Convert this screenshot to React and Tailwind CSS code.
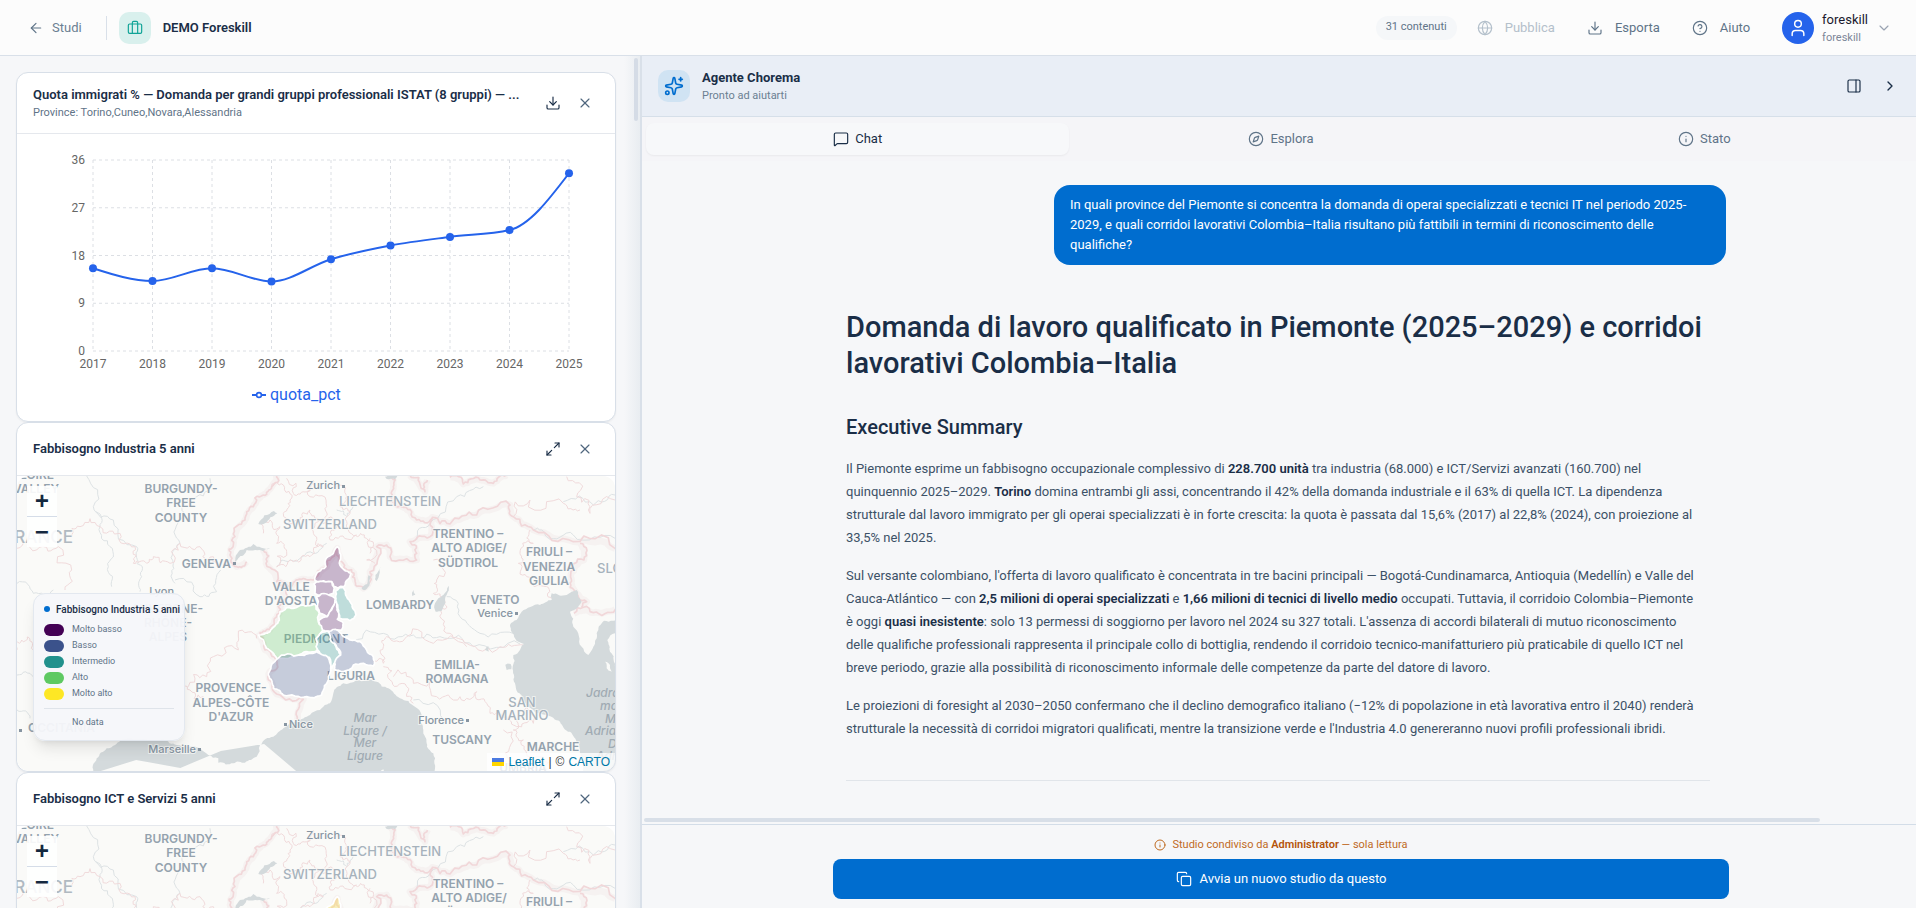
import React from "react";
import {
  ArrowLeft,
  Briefcase,
  ChevronDown,
  ChevronRight,
  CircleQuestionMark,
  Compass,
  Copy,
  Download,
  Globe,
  Info,
  Maximize2,
  MessageSquare,
  PanelRight,
  Sparkles,
  User,
  X,
} from "lucide-react";

/* ---------- line chart ---------- */

const SERIES = [
  [2017, 15.6],
  [2018, 13.2],
  [2019, 15.6],
  [2020, 13.1],
  [2021, 17.3],
  [2022, 19.9],
  [2023, 21.5],
  [2024, 22.8],
  [2025, 33.5],
];

const PLOT = { left: 76, right: 552, top: 26, bottom: 217, max: 36 };

// Monotone cubic interpolation through the points
function monotonePath(pts) {
  const n = pts.length;
  const slope = [];
  for (let i = 0; i < n - 1; i++) {
    slope.push((pts[i + 1][1] - pts[i][1]) / (pts[i + 1][0] - pts[i][0]));
  }
  const t = new Array(n).fill(0);
  for (let i = 1; i < n - 1; i++) {
    const a = slope[i - 1];
    const b = slope[i];
    const mean = (a + b) / 2;
    t[i] = (Math.sign(a) + Math.sign(b)) * Math.min(Math.abs(a), Math.abs(b), 0.5 * Math.abs(mean)) || 0;
  }
  t[0] = (3 * slope[0] - t[1]) / 2;
  t[n - 1] = (3 * slope[n - 2] - t[n - 2]) / 2;
  let d = `M${pts[0][0]},${pts[0][1]}`;
  for (let i = 0; i < n - 1; i++) {
    const dx = (pts[i + 1][0] - pts[i][0]) / 3;
    d += `C${pts[i][0] + dx},${pts[i][1] + dx * t[i]} ${pts[i + 1][0] - dx},${pts[i + 1][1] - dx * t[i + 1]} ${pts[i + 1][0]},${pts[i + 1][1]}`;
  }
  return d;
}

function LineChart() {
  const { left, right, top, bottom, max } = PLOT;
  const x = (i) => left + ((right - left) * i) / (SERIES.length - 1);
  const y = (v) => bottom - ((bottom - top) * v) / max;
  const pts = SERIES.map(([, v], i) => [x(i), y(v)]);
  return (
    <svg viewBox="0 0 598 287" className="block w-full" role="img" aria-label="quota_pct">
      <g stroke="#dcdfe4" strokeDasharray="3 3">
        {[0, 9, 18, 27, 36].map((v) => (
          <line key={v} x1={left} x2={right} y1={y(v)} y2={y(v)} />
        ))}
        {SERIES.map(([year], i) => (
          <line key={year} x1={x(i)} x2={x(i)} y1={top} y2={bottom} />
        ))}
      </g>
      <g fill="#666" fontSize="12">
        {[0, 9, 18, 27, 36].map((v) => (
          <text key={v} x={left - 8} y={y(v) + 4} textAnchor="end">
            {v}
          </text>
        ))}
        {SERIES.map(([year], i) => (
          <text key={year} x={x(i)} y={bottom + 17} textAnchor="middle">
            {year}
          </text>
        ))}
      </g>
      <path d={monotonePath(pts)} fill="none" stroke="#2563eb" strokeWidth="2" />
      {pts.map(([cx, cy]) => (
        <circle key={cx} cx={cx} cy={cy} r="4" fill="#2563eb" />
      ))}
      <g stroke="#2563eb" strokeWidth="2" fill="none">
        <path d="M235 261h5M244 261h5" />
        <circle cx="242" cy="261" r="2.4" strokeWidth="1.6" />
      </g>
      <text x="253" y="266" fontSize="16" fill="#2563eb">
        quota_pct
      </text>
    </svg>
  );
}

/* ---------- map ---------- */

function makeRandom(seed) {
  let s = seed;
  return () => {
    s = (s * 16807) % 2147483647;
    return s / 2147483647 - 0.5;
  };
}

// Turns a coarse outline into a ragged one, as borders and coasts look
function ragged(points, closed, seed, rough = 0.28) {
  const rnd = makeRandom(seed);
  let pts = closed ? [...points, points[0]] : points;
  for (let pass = 0; pass < 3; pass++) {
    const next = [pts[0]];
    for (let i = 1; i < pts.length; i++) {
      const [ax, ay] = pts[i - 1];
      const [bx, by] = pts[i];
      const len = Math.hypot(bx - ax, by - ay);
      if (len > 9) {
        const k = rnd() * rough;
        next.push([(ax + bx) / 2 - (by - ay) * k, (ay + by) / 2 + (bx - ax) * k]);
      }
      next.push(pts[i]);
    }
    pts = next;
  }
  return "M" + pts.map(([a, b]) => `${a.toFixed(1)},${b.toFixed(1)}`).join("L") + (closed ? "Z" : "");
}

const WATER = [
  [[280, 1060], [290, 1015], [320, 985], [345, 975], [352, 968], [420, 958], [490, 958], [530, 975], [600, 985], [625, 1005], [655, 1015], [655, 1028], [700, 1030], [735, 1028], [770, 1010], [780, 975], [820, 950], [850, 925], [890, 905], [930, 885], [960, 870], [990, 850], [1000, 820], [1030, 790], [1070, 780], [1130, 785], [1165, 805], [1200, 835], [1245, 860], [1265, 885], [1270, 930], [1280, 970], [1300, 1000], [1305, 1060]],
  [[1540, 705], [1538, 740], [1545, 790], [1570, 840], [1600, 870], [1640, 885], [1680, 905], [1710, 935], [1735, 970], [1745, 1010], [1750, 1060], [1860, 1060], [1860, 612], [1840, 602], [1812, 602], [1790, 640], [1780, 680], [1765, 705], [1745, 680], [1720, 620], [1710, 575], [1735, 560], [1745, 545], [1730, 510], [1700, 525], [1655, 520], [1655, 540], [1620, 555], [1565, 575], [1550, 600], [1530, 615], [1545, 655], [1572, 672], [1560, 690]],
  [[705, 425], [720, 390], [760, 372], [810, 385], [790, 394], [740, 390], [715, 415]],
  [[775, 312], [822, 273], [832, 280], [795, 310]],
  [[1307, 575], [1305, 550], [1330, 525], [1347, 497], [1340, 525], [1325, 572]],
  [[1085, 507], [1102, 492], [1106, 465], [1112, 470], [1108, 497], [1092, 511]],
  [[1125, 478], [1134, 455], [1142, 440], [1138, 462], [1130, 484]],
  [[1237, 528], [1240, 510], [1246, 524]],
  [[1516, 734], [1532, 732], [1534, 748], [1520, 750]],
  [[1155, 170], [1192, 168], [1185, 178], [1160, 177]],
  [[1455, 690], [1465, 678], [1466, 695]],
];

const ISLANDS = [
  [[1822, 660], [1845, 640], [1860, 700], [1845, 720], [1830, 695]],
  [[1815, 725], [1830, 735], [1835, 755], [1820, 745]],
  [[1845, 700], [1860, 690], [1860, 770], [1848, 750]],
  [[1150, 1048], [1152, 1054], [1142, 1052]],
];

// Country borders
const BORDERS = [
  [[830, 165], [815, 200], [790, 225], [760, 260], [735, 300], [705, 350], [700, 375], [690, 405], [710, 440], [740, 425]],
  [[790, 390], [798, 430], [830, 485], [870, 500], [905, 478], [942, 480], [980, 440], [1012, 385], [1030, 430], [1062, 460], [1065, 480], [1090, 505], [1105, 490], [1110, 455], [1130, 380], [1160, 375], [1170, 410], [1250, 420], [1250, 400], [1230, 365], [1290, 350], [1297, 292], [1350, 312], [1430, 285], [1530, 255], [1540, 290], [1600, 330], [1720, 365], [1846, 386]],
  [[835, 490], [850, 540], [838, 580], [810, 630], [776, 648], [795, 690], [830, 720], [806, 762], [830, 822], [910, 838], [892, 900]],
  [[1170, 165], [1180, 200], [1175, 240], [1210, 262], [1250, 300], [1297, 295]],
  [[1230, 165], [1262, 200], [1275, 215], [1282, 180]],
  [[1350, 172], [1390, 192], [1440, 180], [1480, 190], [1520, 165]],
  [[1740, 370], [1752, 420], [1712, 465], [1722, 510], [1760, 545], [1745, 562]],
  [[1722, 580], [1780, 578], [1846, 568]],
];

// Regional borders
const REGIONS = [
  [[815, 205], [850, 195], [870, 240], [850, 280], [900, 300], [930, 270], [960, 300], [940, 340], [970, 380]],
  [[860, 175], [880, 220], [920, 215], [940, 180], [930, 230], [980, 260], [960, 300], [1010, 320], [1000, 360], [1060, 350], [1100, 355], [1110, 400]],
  [[790, 340], [810, 300], [840, 320], [830, 370], [860, 395], [830, 440], [880, 425], [930, 410], [970, 380]],
  [[1010, 200], [1040, 230], [1020, 260], [1050, 280], [1045, 330], [1070, 345]],
  [[51, 385], [110, 390], [175, 380], [215, 450], [195, 510]],
  [[215, 350], [240, 320], [300, 320], [360, 340], [405, 380], [400, 430], [440, 430], [460, 410], [510, 430], [540, 370], [600, 380], [640, 410], [650, 440]],
  [[565, 800], [620, 770], [640, 710], [715, 690], [715, 645], [770, 655]],
  [[610, 830], [570, 810], [550, 795]],
  [[51, 690], [65, 660], [95, 665], [100, 690]],
  [[1300, 420], [1310, 480], [1300, 520], [1330, 540], [1325, 580], [1350, 640], [1400, 670], [1500, 680], [1570, 675]],
  [[1560, 400], [1555, 430], [1580, 470], [1640, 500], [1655, 535]],
  [[1560, 400], [1600, 370], [1590, 330]],
  [[1120, 725], [1150, 730], [1150, 680], [1160, 650], [1220, 650], [1300, 670], [1400, 680]],
  [[1150, 740], [1170, 780], [1220, 800], [1240, 850]],
  [[1180, 770], [1240, 790], [1310, 830], [1380, 830], [1430, 815], [1460, 850], [1470, 880], [1520, 890], [1550, 920], [1600, 910], [1560, 870]],
  [[1510, 930], [1515, 1000], [1540, 1050]],
  [[1550, 900], [1540, 930], [1570, 960], [1590, 1010], [1640, 1050]],
  [[1700, 170], [1730, 230], [1770, 280], [1845, 240]],
  [[1110, 355], [1100, 420], [1125, 430]],
  [[1540, 290], [1590, 240], [1690, 250], [1740, 270]],
];

// Rivers
const RIVERS = [
  [[260, 168], [280, 260], [340, 300], [410, 380], [415, 430]],
  [[630, 175], [590, 230], [545, 260], [535, 300], [540, 370], [520, 430], [525, 490]],
  [[288, 275], [300, 320], [330, 380], [325, 440], [335, 500]],
  [[51, 490], [100, 520], [160, 510]],
  [[410, 430], [425, 470], [420, 515]],
  [[525, 480], [600, 530], [650, 515], [662, 450]],
  [[51, 765], [100, 770]],
  [[51, 870], [90, 895]],
  [[1060, 665], [1150, 640], [1240, 645], [1320, 650], [1420, 680], [1560, 672]],
  [[1250, 360], [1290, 310], [1370, 230], [1450, 200]],
  [[1690, 245], [1780, 255], [1845, 225]],
  [[1600, 330], [1640, 350], [1720, 345], [1845, 355]],
  [[1340, 530], [1380, 590], [1440, 640], [1540, 640]],
  [[830, 440], [870, 420], [940, 400], [980, 370]],
  [[1010, 270], [1040, 290], [1060, 260]],
  [[1240, 840], [1330, 900], [1390, 905]],
];

const AREAS = {
  north: [[1012, 380], [1018, 430], [1053, 460], [1034, 498], [1012, 504], [1002, 500], [995, 485], [945, 482], [955, 455], [978, 440], [975, 425], [1000, 400]],
  biella: [[942, 492], [960, 484], [995, 485], [1003, 505], [1000, 520], [960, 526], [945, 520]],
  vercelli: [[950, 530], [980, 522], [1006, 536], [998, 560], [980, 590], [960, 580], [952, 560]],
  casale: [[1006, 540], [1010, 560], [1012, 598], [1030, 610], [1025, 630], [968, 630], [956, 602], [982, 590], [998, 562]],
  novara: [[1008, 512], [1030, 503], [1050, 545], [1068, 585], [1050, 602], [1018, 594], [1010, 550]],
  torino: [[840, 575], [880, 565], [910, 555], [945, 552], [958, 580], [955, 606], [968, 632], [948, 655], [950, 692], [900, 703], [830, 715], [800, 685], [790, 660], [775, 645], [810, 635], [838, 600]],
  asti: [[950, 655], [975, 636], [984, 634], [1000, 655], [1008, 680], [1022, 705], [1005, 728], [995, 745], [988, 712], [960, 700], [948, 680]],
  alessandria: [[984, 634], [1015, 632], [1050, 660], [1080, 665], [1100, 690], [1120, 710], [1120, 738], [1060, 735], [1030, 755], [1003, 748], [1004, 728], [1022, 705], [1008, 675]],
  cuneo: [[830, 718], [900, 705], [950, 695], [984, 712], [992, 745], [985, 770], [965, 825], [920, 830], [850, 825], [820, 805], [805, 765]],
};

const CLASSES = [
  ["Molto basso", "bg-[#440154]"],
  ["Basso", "bg-[#3b528b]"],
  ["Intermedio", "bg-[#21918c]"],
  ["Alto", "bg-[#5ec962]"],
  ["Molto alto", "bg-[#fde725]"],
];

const INDUSTRY_FILL = {
  north: "#440154",
  biella: "#440154",
  vercelli: "#440154",
  casale: "#440154",
  novara: "#21918c",
  torino: "#5ec962",
  asti: "#21918c",
  alessandria: "#3b528b",
  cuneo: "#3b528b",
};

const ICT_FILL = {
  north: "#fde725",
  biella: "#440154",
  vercelli: "#3b528b",
  casale: "#440154",
  novara: "#21918c",
  torino: "#fde725",
  asti: "#3b528b",
  alessandria: "#21918c",
  cuneo: "#5ec962",
};

// [text, x, baseline, anchor, kind]
const LABELS = [
  ["LOIRE", 20, 3, "middle", "region"],
  ["VALLEY", 19, 17, "middle", "region"],
  ["FRANCE", 56, 67, "end", "nation"],
  ["BURGUNDY-", 164, 17, "middle", "region"],
  ["FREE", 164, 31, "middle", "region"],
  ["COUNTY", 164, 46, "middle", "region"],
  ["Zurich", 323, 13, "end", "city"],
  ["LIECHTENSTEIN", 373, 30, "middle", "country"],
  ["SWITZERLAND", 313, 53, "middle", "country"],
  ["GENEVA", 214, 92, "end", "region"],
  ["VALLE", 274, 115, "middle", "region"],
  ["D'AOSTA", 274, 129, "middle", "region"],
  ["PIEDMONT", 299, 167, "middle", "region"],
  ["Lyon", 157, 119, "end", "city"],
  ["AUVERGNE-", 186, 137, "end", "region"],
  ["RHÔNE-", 175, 151, "end", "region"],
  ["ALPES", 170, 165, "end", "region"],
  ["PROVENCE-", 214, 216, "middle", "region"],
  ["ALPES-CÔTE", 214, 231, "middle", "region"],
  ["D'AZUR", 214, 245, "middle", "region"],
  ["Nice", 272, 252, "start", "city"],
  ["Marseille", 179, 277, "end", "city"],
  ["OCCITANIA", 11, 256, "start", "region"],
  ["TRENTINO –", 451, 62, "middle", "region"],
  ["ALTO ADIGE/", 452, 76, "middle", "region"],
  ["SÜDTIROL", 451, 91, "middle", "region"],
  ["FRIULI –", 532, 80, "middle", "region"],
  ["VENEZIA", 532, 95, "middle", "region"],
  ["GIULIA", 532, 109, "middle", "region"],
  ["SLOVENIA", 580, 97, "start", "country"],
  ["LOMBARDY", 383, 133, "middle", "region"],
  ["VENETO", 478, 128, "middle", "region"],
  ["Venice", 496, 141, "end", "city"],
  ["EMILIA-", 440, 193, "middle", "region"],
  ["ROMAGNA", 440, 207, "middle", "region"],
  ["LIGURIA", 334, 204, "middle", "region"],
  ["SAN", 505, 231, "middle", "country"],
  ["MARINO", 505, 244, "middle", "country"],
  ["Florence", 447, 248, "end", "city"],
  ["TUSCANY", 445, 268, "middle", "region"],
  ["MARCHE", 536, 275, "middle", "region"],
  ["UMBRIA", 506, 296, "middle", "region"],
  ["Mar", 348, 246, "middle", "sea"],
  ["Ligure /", 348, 259, "middle", "sea"],
  ["Mer", 348, 271, "middle", "sea"],
  ["Ligure", 348, 284, "middle", "sea"],
  ["Jadransko", 569, 221, "start", "sea"],
  ["more /", 583, 234, "start", "sea"],
  ["Mare", 588, 247, "start", "sea"],
  ["Adriatico", 568, 259, "start", "sea"],
  ["Deti", 591, 272, "start", "sea"],
  ["Adriatik", 579, 284, "start", "sea"],
];

const LABEL_STYLE = {
  region: "fill-[#94a2ae] text-[12px] font-semibold",
  country: "fill-[#a6b2bc] text-[13px] font-medium",
  nation: "fill-[#b0b9c1] text-[17px] font-medium",
  city: "fill-[#8795a2] text-[11px] font-medium",
  sea: "fill-[#a0abb3] text-[12px] font-medium italic",
};

const CITY_DOTS = [
  [326, 10],
  [217, 87],
  [268, 248],
  [182, 273],
  [499, 137],
  [450, 244],
  [3, 254],
];

function BaseMap({ fills }) {
  return (
    <svg
      viewBox="0 0 598 295"
      className="block w-full bg-[#fafaf8] font-['Inter','Open_Sans',sans-serif]"
      role="img"
      aria-label="Mappa"
    >
      <g transform="translate(-17 -56) scale(0.33333)">
        <g fill="none" stroke="#f6f2f1" strokeWidth="20" strokeLinejoin="round">
          {BORDERS.map((line, i) => (
            <path key={i} d={ragged(line, false, 41 + i * 97)} />
          ))}
        </g>
        <g fill="none" stroke="#dde2e4" strokeWidth="3">
          {RIVERS.map((line, i) => (
            <path key={i} d={ragged(line, false, 311 + i * 53, 0.5)} />
          ))}
        </g>
        <g fill="none" stroke="#f0dadb" strokeWidth="3">
          {REGIONS.map((line, i) => (
            <path key={i} d={ragged(line, false, 907 + i * 71, 0.8)} />
          ))}
        </g>
        <g fill="none" stroke="#f1d7d9" strokeWidth="5" strokeLinejoin="round">
          {BORDERS.map((line, i) => (
            <path key={i} d={ragged(line, false, 41 + i * 97, 0.6)} />
          ))}
        </g>
        <g fill="#d4dadc">
          {WATER.map((area, i) => (
            <path key={i} d={ragged(area, true, 17 + i * 131)} />
          ))}
        </g>
        <g fill="#fafaf8">
          {ISLANDS.map((area, i) => (
            <path key={i} d={ragged(area, true, 67 + i * 31)} />
          ))}
        </g>
      </g>
      {LABELS.map(([text, x, y, anchor, kind]) => (
        <text
          key={`${text}${y}`}
          x={x}
          y={y}
          textAnchor={anchor}
          className={LABEL_STYLE[kind]}
          stroke={kind === "sea" ? "none" : "#fafaf8"}
          strokeWidth="2"
          strokeOpacity="0.7"
          paintOrder="stroke"
        >
          {text}
        </text>
      ))}
      {CITY_DOTS.map(([x, y]) => (
        <rect key={`${x}-${y}`} x={x - 1} y={y - 1} width="3" height="3" fill="#8795a2" />
      ))}
      <g transform="translate(-17 -56) scale(0.33333)">
        {Object.entries(AREAS).map(([name, area], i) => (
          <path
            key={name}
            d={ragged(area, true, 501 + i * 89, 0.3)}
            fill={fills[name]}
            fillOpacity="0.27"
            stroke="#fff"
            strokeWidth="5"
            strokeLinejoin="round"
          />
        ))}
      </g>
    </svg>
  );
}

function MapLegend({ title }) {
  return (
    <div className="absolute top-[117px] left-4 w-[152px] rounded-xl border border-[#e3e8ef] bg-[#f6f7fa]/95 px-[10px] pt-[9px] pb-1 shadow-lg">
      <div className="flex h-3 items-center gap-1.5 whitespace-nowrap text-[10px] font-medium text-[#1a2e47]">
        <span className="size-1.5 shrink-0 rounded-full bg-[#006dcf]" />
        {title}
      </div>
      <ul className="mt-[9px] flex flex-col gap-1">
        {CLASSES.map(([name, colour]) => (
          <li key={name} className="flex h-3 items-center gap-2 text-[9px] text-[#5f7488]">
            <span className={`h-3 w-5 rounded-full ${colour}`} />
            {name}
          </li>
        ))}
      </ul>
      <div className="mt-2 flex h-7 items-center border-t border-[#dfe4ea] pl-7 text-[9px] text-[#5f7488]">No data</div>
    </div>
  );
}

function LeafletMap({ title, fills }) {
  const zoomButton =
    "flex h-[30px] w-[30px] items-center justify-center bg-white/90 pt-1 font-['Liberation_Mono',monospace] text-[24px] leading-none font-bold text-[#14283f]";
  return (
    <div className="relative overflow-hidden rounded-xl">
      <BaseMap fills={fills} />
      <div className="absolute top-2.5 left-2.5 flex flex-col">
        <button type="button" aria-label="Zoom in" className={zoomButton}>
          +
        </button>
        <span className="h-px bg-[#d5dde8]" />
        <button type="button" aria-label="Zoom out" className={zoomButton}>
          −
        </button>
      </div>
      <MapLegend title={title} />
      <div className="absolute right-0 bottom-0 flex h-[18px] items-center gap-1 bg-white/80 px-[5px] font-['Liberation_Sans',sans-serif] text-[12px] text-[#333]">
        <a href="#leaflet" className="flex items-center gap-1 text-[#0078a8]">
          <svg viewBox="0 0 12 8" className="h-2 w-3">
            <path fill="#4C7BE1" d="M0 0h12v4H0z" />
            <path fill="#FFD500" d="M0 4h12v4H0z" />
          </svg>
          Leaflet
        </a>
        <span>|</span>
        <span>©</span>
        <a href="#carto" className="text-[#0078a8]">
          CARTO
        </a>
      </div>
    </div>
  );
}

/* ---------- cards ---------- */

function Card({ title, subtitle, action, children }) {
  return (
    <section className="shrink-0 overflow-hidden rounded-xl border border-[#d8dfe8] bg-white shadow-xs">
      <header
        className={`flex items-center gap-2 border-b border-[#e5e8ed] px-4 ${subtitle ? "h-[61px]" : "h-[53px]"}`}
      >
        <div className="min-w-0 flex-1">
          <h3 className="truncate text-[13px] leading-5 font-semibold text-[#1a2e47]">{title}</h3>
          {subtitle && <p className="truncate text-[11px] leading-4 text-[#5f7488]">{subtitle}</p>}
        </div>
        <div className="flex shrink-0 items-center">
          {action}
          <button type="button" aria-label="Chiudi" className="flex size-7 items-center justify-center text-[#50677e]">
            <X size={16} strokeWidth={1.75} />
          </button>
        </div>
      </header>
      {children}
    </section>
  );
}

function CardAction({ label, icon: Icon }) {
  return (
    <button type="button" aria-label={label} className="mr-1 flex size-7 items-center justify-center text-[#1a2e47]">
      <Icon size={16} strokeWidth={1.75} />
    </button>
  );
}

function StudyPanel() {
  return (
    <aside className="relative flex w-[642px] shrink-0 overflow-hidden border-r-2 border-[#d9e0e9] bg-[#f6f7f9]">
      <div className="flex h-full min-w-0 flex-1 flex-col overflow-hidden pt-4 pr-6 pl-4">
        <Card
          title="Quota immigrati % — Domanda per grandi gruppi professionali ISTAT (8 gruppi) — ..."
          subtitle="Province: Torino,Cuneo,Novara,Alessandria"
          action={<CardAction label="Scarica" icon={Download} />}
        >
          <LineChart />
        </Card>
        <Card title="Fabbisogno Industria 5 anni" action={<CardAction label="Espandi" icon={Maximize2} />}>
          <LeafletMap title="Fabbisogno Industria 5 anni" fills={INDUSTRY_FILL} />
        </Card>
        <Card title="Fabbisogno ICT e Servizi 5 anni" action={<CardAction label="Espandi" icon={Maximize2} />}>
          <LeafletMap title="Fabbisogno ICT e Servizi" fills={ICT_FILL} />
        </Card>
      </div>
      <div className="absolute inset-y-0 right-0 w-4 bg-linear-to-r from-transparent to-[#e9edf1]" />
      <div className="absolute top-0.5 right-0.5 h-[63px] w-1 rounded-full bg-[#d5dce6]" />
    </aside>
  );
}

/* ---------- header ---------- */

function HeaderButton({ icon: Icon, label, disabled }) {
  return (
    <button
      type="button"
      disabled={disabled}
      className={`flex h-8 items-center gap-3 px-4 text-[13px] ${disabled ? "text-[#b4c0cb]" : "text-[#5f7488]"}`}
    >
      <Icon size={16} strokeWidth={1.75} />
      {label}
    </button>
  );
}

function TopBar() {
  return (
    <header className="flex h-14 shrink-0 items-center border-b border-[#d9e0e9] bg-[#fcfcfc] pr-6 pl-7">
      <a href="#studi" className="flex items-center gap-2 text-[13px] text-[#6b7f92]">
        <ArrowLeft size={16} strokeWidth={1.75} className="text-[#5f7488]" />
        Studi
      </a>
      <span className="ml-6 h-6 w-px bg-[#d9e0e9]" />
      <span className="ml-3 flex size-8 items-center justify-center rounded-[10px] bg-[#d9f0ed] text-[#0fa396]">
        <Briefcase size={16} strokeWidth={1.75} />
      </span>
      <h1 className="ml-3 text-[13px] font-semibold text-[#1a2e47]">DEMO Foreskill</h1>
      <div className="ml-auto flex items-center">
        <span className="mr-1 flex h-6 items-center rounded-full bg-[#f5f7f9] px-2.5 text-[11px] text-[#5f7488]">
          31 contenuti
        </span>
        <HeaderButton icon={Globe} label="Pubblica" disabled />
        <HeaderButton icon={Download} label="Esporta" />
        <HeaderButton icon={CircleQuestionMark} label="Aiuto" />
        <button type="button" className="ml-4 flex items-center gap-2 text-left">
          <span className="flex size-8 items-center justify-center rounded-full bg-[#2563eb] text-white">
            <User size={20} strokeWidth={1.75} />
          </span>
          <span className="flex flex-col">
            <span className="text-[13px] leading-5 text-[#1a1a2e]">foreskill</span>
            <span className="text-[11px] leading-4 text-[#7c8698]">foreskill</span>
          </span>
          <ChevronDown size={16} strokeWidth={1.75} className="text-[#9aa3b2]" />
        </button>
      </div>
    </header>
  );
}

/* ---------- agent ---------- */

function Tab({ icon: Icon, label, active }) {
  return (
    <button
      type="button"
      role="tab"
      aria-selected={active ? "true" : "false"}
      className={`flex h-8 flex-1 items-center justify-center gap-1.5 rounded-lg text-[13px] ${
        active ? "bg-[#f7f8fa] text-[#1a2e47] shadow-xs" : "text-[#5f7488]"
      }`}
    >
      <Icon size={16} strokeWidth={1.75} />
      {label}
    </button>
  );
}

function Strong({ children }) {
  return <strong className="font-semibold text-[#1a2e47]">{children}</strong>;
}

function Conversation() {
  return (
    <div className="min-h-0 flex-1 overflow-hidden pr-1 pl-0.5">
      <div className="mx-auto flex max-w-4xl flex-col pt-6">
        <div className="w-3/4 self-end rounded-2xl bg-[#006dcf] px-4 py-2.5 text-[13px] leading-5 text-white">
          In quali province del Piemonte si concentra la domanda di operai specializzati e tecnici IT nel periodo 2025-
          <br />
          2029, e quali corridoi lavorativi Colombia–Italia risultano più fattibili in termini di riconoscimento delle
          <br />
          qualifiche?
        </div>
        <article className="mt-11 px-4 text-[13px] leading-[23px] text-[#3c5167]">
          <h2 className="text-[29px] leading-9 font-medium text-[#1a2e47]">
            Domanda di lavoro qualificato in Piemonte (2025–2029) e corridoi lavorativi Colombia–Italia
          </h2>
          <h3 className="mt-8 text-[20px] leading-7 font-medium text-[#1a2e47]">Executive Summary</h3>
          <div className="mt-4 flex flex-col gap-[15px]">
            <p>
              Il Piemonte esprime un fabbisogno occupazionale complessivo di <Strong>228.700 unità</Strong> tra industria
              (68.000) e ICT/Servizi avanzati (160.700) nel
              <br />
              quinquennio 2025–2029. <Strong>Torino</Strong> domina entrambi gli assi, concentrando il 42% della domanda
              industriale e il 63% di quella ICT. La dipendenza
              <br />
              strutturale dal lavoro immigrato per gli operai specializzati è in forte crescita: la quota è passata dal
              15,6% (2017) al 22,8% (2024), con proiezione al
              <br />
              33,5% nel 2025.
            </p>
            <p>
              Sul versante colombiano, l'offerta di lavoro qualificato è concentrata in tre bacini principali —
              Bogotá-Cundinamarca, Antioquia (Medellín) e Valle del
              <br />
              Cauca-Atlántico — con <Strong>2,5 milioni di operai specializzati</Strong> e{" "}
              <Strong>1,66 milioni di tecnici di livello medio</Strong> occupati. Tuttavia, il corridoio
              Colombia–Piemonte
              <br />è oggi <Strong>quasi inesistente</Strong>: solo 13 permessi di soggiorno per lavoro nel 2024 su 327
              totali. L'assenza di accordi bilaterali di mutuo riconoscimento
              <br />
              delle qualifiche professionali rappresenta il principale collo di bottiglia, rendendo il corridoio
              tecnico-manifatturiero più praticabile di quello ICT nel
              <br />
              breve periodo, grazie alla possibilità di riconoscimento informale delle competenze da parte del datore di
              lavoro.
            </p>
            <p>
              Le proiezioni di foresight al 2030–2050 confermano che il declino demografico italiano (−12% di popolazione
              in età lavorativa entro il 2040) renderà
              <br />
              strutturale la necessità di corridoi migratori qualificati, mentre la transizione verde e l'Industria 4.0
              genereranno nuovi profili professionali ibridi.
            </p>
          </div>
          <hr className="mt-10 border-[#e1e5ea]" />
        </article>
      </div>
    </div>
  );
}

function AgentPanel() {
  return (
    <main className="flex min-w-0 flex-1 flex-col bg-[#f6f7f9]">
      <header className="flex h-[61px] shrink-0 items-center border-b border-[#d6dfe9] bg-[#e9eef6] pr-2 pl-4">
        <span className="flex size-8 items-center justify-center rounded-[10px] bg-[#d0e3f3] text-[#006dcf]">
          <Sparkles size={20} strokeWidth={2} />
        </span>
        <div className="ml-3 flex-1">
          <h2 className="text-[13px] leading-5 font-bold text-[#1a2e47]">Agente Chorema</h2>
          <p className="text-[11px] leading-4 text-[#6b7f92]">Pronto ad aiutarti</p>
        </div>
        <button type="button" aria-label="Pannello" className="flex size-9 items-center justify-center text-[#1a2e47]">
          <PanelRight size={16} strokeWidth={1.75} />
        </button>
        <button type="button" aria-label="Comprimi" className="flex size-9 items-center justify-center text-[#1a2e47]">
          <ChevronRight size={16} strokeWidth={2} />
        </button>
      </header>
      <div role="tablist" className="flex shrink-0 bg-[#f5f5f8] py-1.5 pl-1">
        <Tab icon={MessageSquare} label="Chat" active />
        <Tab icon={Compass} label="Esplora" />
        <Tab icon={Info} label="Stato" />
      </div>
      <Conversation />
      <div className="mr-24 ml-0.5 h-1 shrink-0 rounded-full bg-[#d8dfe8]" />
      <footer className="mt-0.5 shrink-0 border-t border-[#d3dde8] pt-3 pb-[9px] pl-1">
        <div className="mx-auto max-w-4xl">
          <p className="flex h-4 items-center justify-center gap-1.5 text-[11px] text-[#bf6a1f]">
            <Info size={12} strokeWidth={2} />
            <span>
              Studio condiviso da <strong className="font-semibold text-[#b45309]">Administrator</strong> — sola lettura
            </span>
          </p>
          <button
            type="button"
            className="mt-1.5 flex h-10 w-full items-center justify-center gap-2 rounded-lg bg-[#006dcf] text-[13px] text-white"
          >
            <Copy size={16} strokeWidth={1.75} />
            Avvia un nuovo studio da questo
          </button>
        </div>
      </footer>
    </main>
  );
}

export default function App() {
  return (
    <div className="flex h-screen flex-col overflow-hidden bg-[#f6f7f9] font-['Roboto','Open_Sans',sans-serif]">
      <TopBar />
      <div className="flex min-h-0 flex-1">
        <StudyPanel />
        <AgentPanel />
      </div>
    </div>
  );
}
